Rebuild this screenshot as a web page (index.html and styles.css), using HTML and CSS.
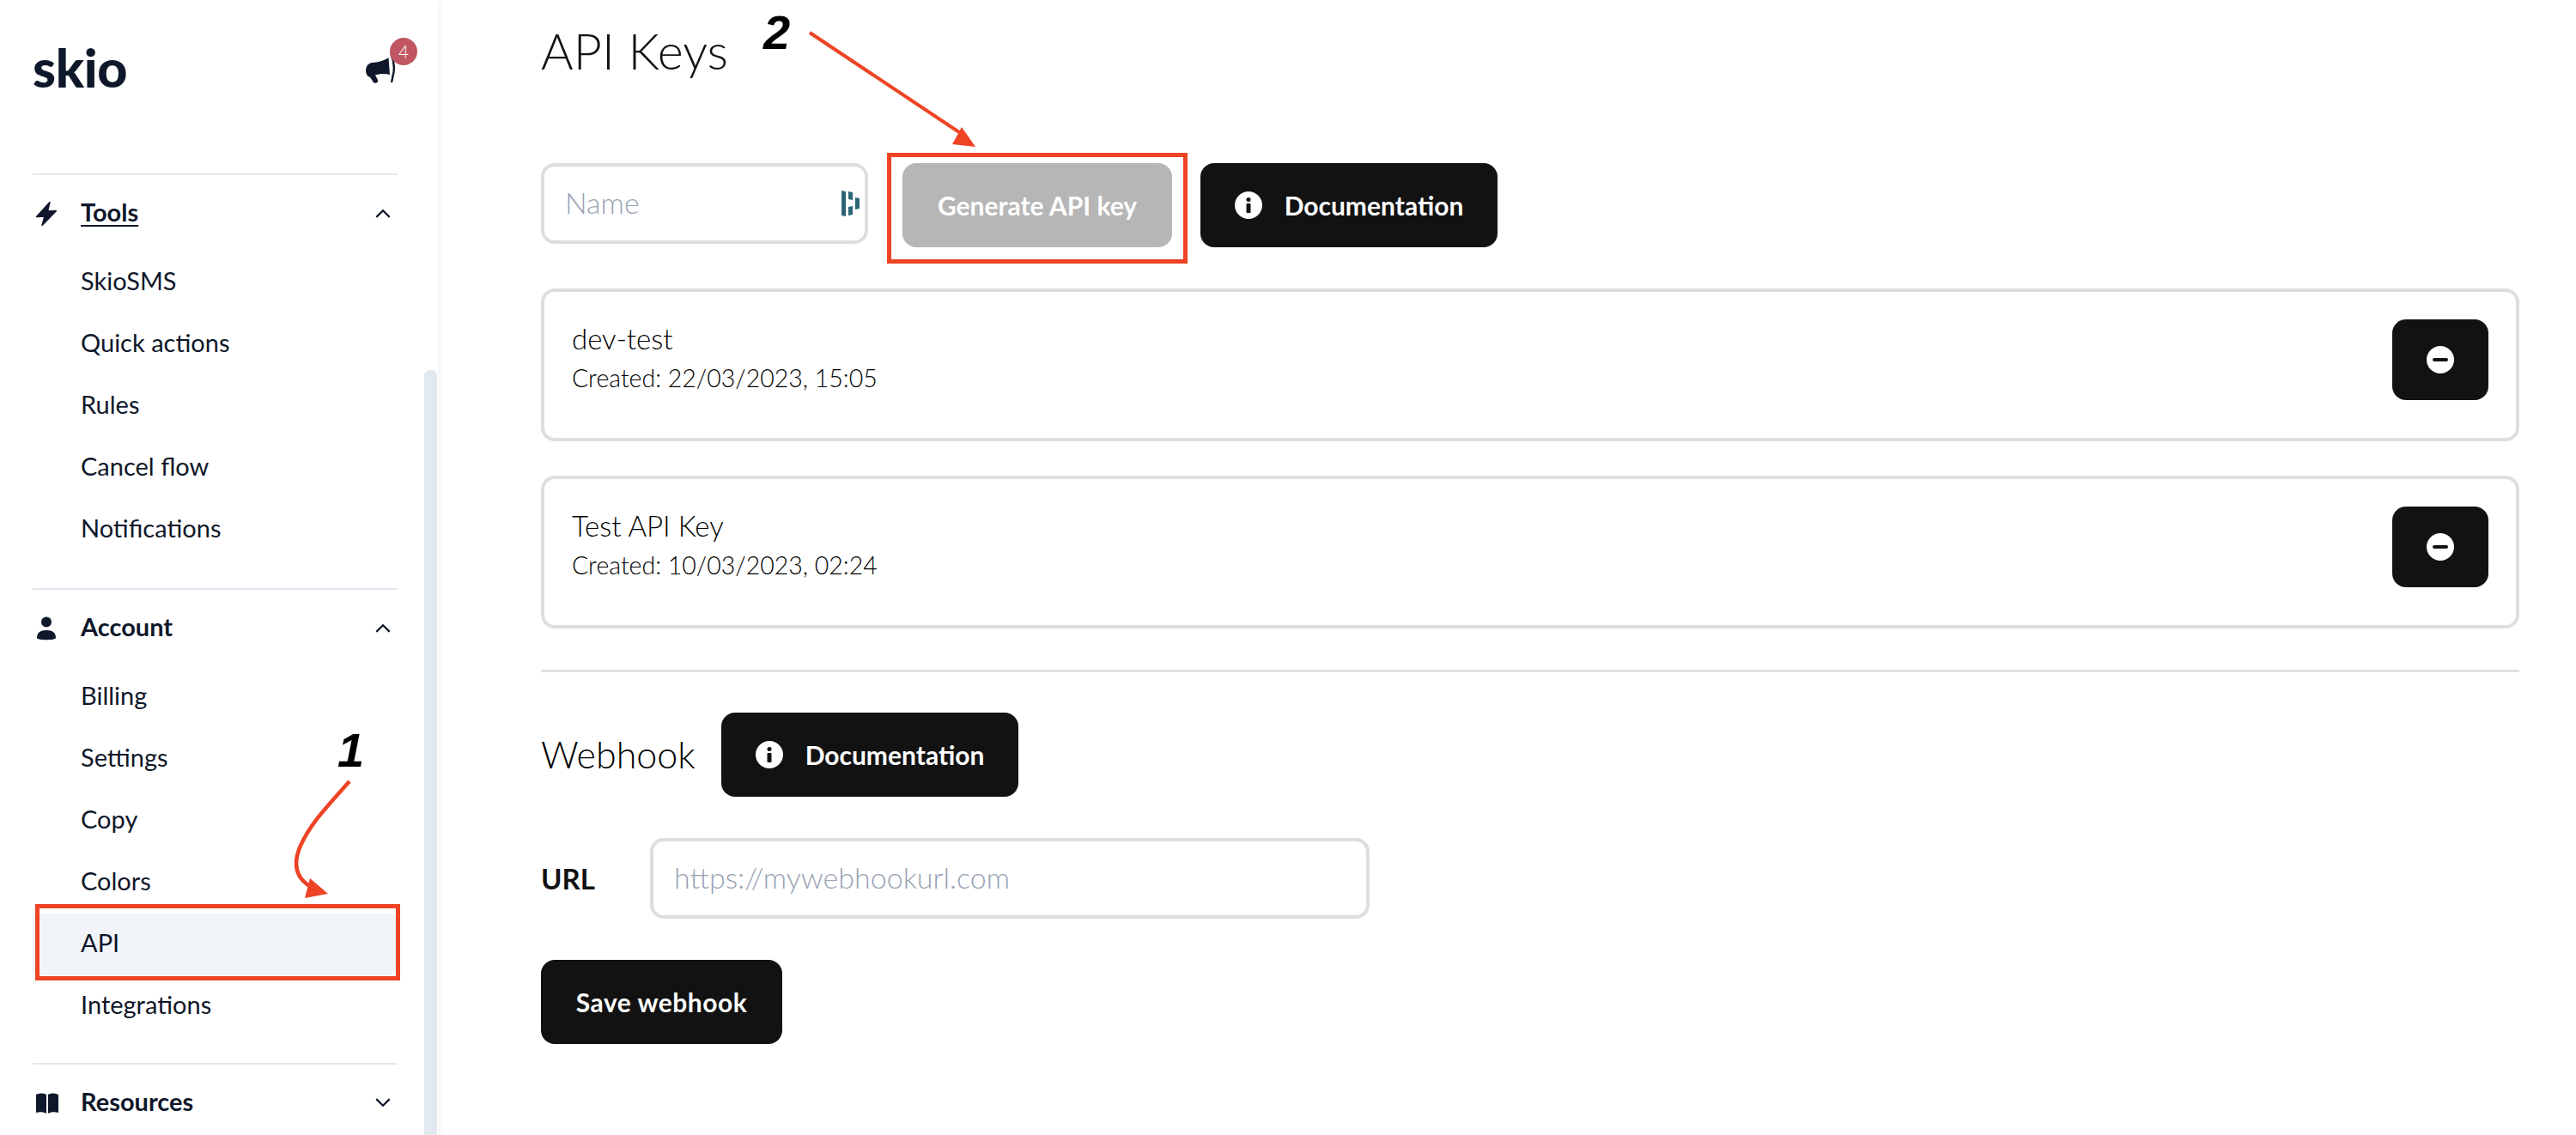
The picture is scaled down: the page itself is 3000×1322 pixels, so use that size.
FILE: index.html
```html
<!DOCTYPE html>
<html lang="en">
<head>
<meta charset="utf-8">
<title>API Keys</title>
<link rel="stylesheet" href="styles.css">
</head>
<body>
<div class="app">
  <aside class="sidebar">
    <div class="scrollbar"></div>
    <header class="brand">
      <div class="logo">skio</div>
      <div class="bell">
        <svg class="mega" viewBox="0 0 34 34" width="34" height="34"><path d="M26.500 4 L28 24 C22 22.500 16 23 11 24.500 L14 30 C15 33 11 35 9 33 L5 27 C1.500 26 -0.500 22 0.200 17.500 C1 13 3.500 10.500 7.500 10 C14 9.500 21 8 26.500 4 Z" fill="#0f172a"/><path d="M29.500 0.500 C33 8 33.500 13 32.500 21 L30 33" fill="none" stroke="#0f172a" stroke-width="2.400"/></svg>
        <span class="badge">4</span>
      </div>
    </header>
    <section class="group">
      <div class="group-head">
        <svg class="gicon" viewBox="0 0 24 28" width="24" height="28"><path d="M16 0.500 L0.500 17.500 L10 17 L7 27.500 L23.500 10.500 L13.500 11 Z" fill="#0f172a" stroke="#0f172a" stroke-width="1.500" stroke-linejoin="round"/></svg>
        <span class="group-title underlined">Tools</span>
        <svg class="chev" viewBox="0 0 16 10" width="18" height="11"><path d="M1 9 L8 2 L15 9" fill="none" stroke="#0f172a" stroke-width="2"/></svg>
      </div>
      <a class="item">SkioSMS</a>
      <a class="item">Quick actions</a>
      <a class="item">Rules</a>
      <a class="item">Cancel flow</a>
      <a class="item">Notifications</a>
    </section>
    <section class="group group-tight">
      <div class="group-head">
        <svg class="gicon" viewBox="0 0 24 28" width="24" height="28"><circle cx="12" cy="6.500" r="6" fill="#0f172a"/><path d="M1 25 C1 19 5 16 12 16 C19 16 23 19 23 25 C23 28 1 28 1 25 Z" fill="#0f172a"/></svg>
        <span class="group-title">Account</span>
        <svg class="chev" viewBox="0 0 16 10" width="18" height="11"><path d="M1 9 L8 2 L15 9" fill="none" stroke="#0f172a" stroke-width="2"/></svg>
      </div>
      <a class="item">Billing</a>
      <a class="item">Settings</a>
      <a class="item">Copy</a>
      <a class="item">Colors</a>
      <a class="item active">API</a>
      <a class="item">Integrations</a>
    </section>
    <section class="group">
      <div class="group-head">
        <svg class="gicon" viewBox="0 0 26 24" width="26" height="24"><path d="M0 2 C4 0 9 0 12 2 V24 C9 22 4 22 0 23 Z M14 2 C17 0 22 0 26 2 V23 C22 22 17 22 14 24 Z" fill="#0f172a"/></svg>
        <span class="group-title">Resources</span>
        <svg class="chev" viewBox="0 0 16 10" width="18" height="11"><path d="M1 1 L8 8 L15 1" fill="none" stroke="#0f172a" stroke-width="2"/></svg>
      </div>
    </section>
  </aside>

  <main class="main">
    <h1 class="title">API Keys</h1>
    <div class="toolbar">
      <label class="field name-field">
        <input class="input" placeholder="Name">
        <svg class="pm" viewBox="0 0 21 30" width="21" height="30"><path d="M0 0 L5 1 V30 L0 29 Z M8 1 L13 2 V11 L8 10 Z M8 19 L13 18 V28 L8 29 Z M16 8 L21 9 V21 L16 22 Z" fill="#2c6577"/></svg>
      </label>
      <button class="btn btn-muted gen">Generate API key</button>
      <button class="btn doc">
        <svg class="ic" viewBox="0 0 32 32" width="32" height="32"><circle cx="16" cy="16" r="16" fill="#fff"/><circle cx="16" cy="9.500" r="2.500" fill="#121212"/><rect x="13.500" y="14" width="5" height="11" rx="1" fill="#121212"/></svg>
        Documentation
      </button>
    </div>
    <div class="keys">
      <article class="card">
        <div>
          <div class="key-name">dev-test</div>
          <div class="key-date">Created: 22/03/2023, 15:05</div>
        </div>
        <button class="btn del" aria-label="Delete"><svg viewBox="0 0 32 32" width="32" height="32"><circle cx="16" cy="16" r="16" fill="#fff"/><rect x="7" y="14" width="18" height="4" rx="2" fill="#121212"/></svg></button>
      </article>
      <article class="card">
        <div>
          <div class="key-name">Test API Key</div>
          <div class="key-date">Created: 10/03/2023, 02:24</div>
        </div>
        <button class="btn del" aria-label="Delete"><svg viewBox="0 0 32 32" width="32" height="32"><circle cx="16" cy="16" r="16" fill="#fff"/><rect x="7" y="14" width="18" height="4" rx="2" fill="#121212"/></svg></button>
      </article>
    </div>
    <hr class="rule">
    <div class="webhook-head">
      <h2 class="subtitle">Webhook</h2>
      <button class="btn doc">
        <svg class="ic" viewBox="0 0 32 32" width="32" height="32"><circle cx="16" cy="16" r="16" fill="#fff"/><circle cx="16" cy="9.500" r="2.500" fill="#121212"/><rect x="13.500" y="14" width="5" height="11" rx="1" fill="#121212"/></svg>
        Documentation
      </button>
    </div>
    <div class="url-row">
      <span class="url-label">URL</span>
      <label class="field url-field"><input class="input" placeholder="https://mywebhookurl.com"></label>
    </div>
    <button class="btn save">Save webhook</button>
  </main>

  <svg class="annotations" viewBox="0 0 3000 1322" width="3000" height="1322">
    <rect x="43.500" y="1055.500" width="420" height="84" fill="none" stroke="#ee4325" stroke-width="5"/>
    <rect x="1035.500" y="180.500" width="345" height="124" fill="none" stroke="#ee4325" stroke-width="5"/>
    <path d="M407 910 C385 935 362 958 350 985 C340 1008 345 1024 364 1034" fill="none" stroke="#ee4325" stroke-width="4.500"/>
    <path d="M361 1023 L382 1041 L355 1046 Z" fill="#ee4325"/>
    <path d="M943 38 L1126 160" fill="none" stroke="#ee4325" stroke-width="4"/>
    <path d="M1120 148 L1136 171 L1109 168 Z" fill="#ee4325"/>
    <text class="mark" x="393" y="893">1</text>
    <text class="mark" x="889" y="57">2</text>
  </svg>
</div>
</body>
</html>
```
FILE: styles.css
```css
* { box-sizing: border-box; }
html, body { margin: 0; padding: 0; height: 100%; background: #fff; }
body { font-family: Lato, "Open Sans", sans-serif; color: #121212; overflow: hidden; }
.app { display: flex; width: 3000px; height: 1322px; position: relative; overflow: hidden; }

.sidebar { position: relative; flex: none; width: 510px; height: 1322px; padding-left: 38px; box-shadow: 3px 0 4px #f4f5f8; color: #0f172a; overflow: hidden; }
.scrollbar { position: absolute; left: 494px; top: 431px; width: 15px; height: 900px; border-radius: 7px; background: #e2e8f0; }
.brand { display: flex; width: 425px; height: 202px; position: relative; }
.logo { font-size: 61px; font-weight: 900; line-height: 60px; margin-top: 49px; letter-spacing: -0.300px; }
.bell { position: absolute; left: 388px; top: 44px; width: 60px; height: 54px; }
.mega { position: absolute; left: 0; top: 19px; }
.badge { position: absolute; left: 28px; top: 0; width: 32px; height: 32px; border-radius: 50%; background: #c05661; color: #fff; font-size: 21px; line-height: 32px; text-align: center; font-weight: 300; }

.group { width: 425px; border-top: 2px solid #e2e8f0; padding-bottom: 32px; }
.group-tight { padding-bottom: 30px; }
.group-head { display: flex; align-items: center; height: 36px; margin: 27px 0 26px; position: relative; }
.gicon { position: absolute; left: 4px; top: 50%; transform: translateY(-50%); }
.group-title { margin-left: 56px; padding-bottom: 4px; font-size: 29px; font-weight: 700; line-height: 32px; }
.underlined { text-decoration: underline; text-underline-offset: 4px; text-decoration-thickness: 2px; }
.chev { position: absolute; left: 399px; top: 12px; }
.item { display: block; height: 72px; line-height: 68px; padding-left: 56px; font-size: 29px; border-radius: 8px; }
.item.active { background: #f1f5f9; }

.main { flex: 1; padding: 28px 66px 0 120px; min-width: 0; }
.title { margin: 0 0 100px; font-size: 57.500px; font-weight: 300; line-height: 62px; }
.toolbar { display: flex; align-items: flex-start; }
.field { display: flex; align-items: center; height: 94px; border: 4px solid #dedede; border-radius: 16px; background: #fff; padding: 0 24px; }
.input { flex: 1; min-width: 0; border: 0; outline: 0; padding: 0 0 3px; background: none; font: 300 34px Lato, sans-serif; color: #121212; }
.input::placeholder { color: #98a2b3; opacity: 1; }
.name-field { width: 381px; padding-right: 6px; }
.pm { flex: none; }

.btn { display: inline-flex; align-items: center; justify-content: center; flex: none; height: 98px; border: 0; border-radius: 16px; background: #121212; color: #fff; font: 700 30px Lato, sans-serif; padding: 0; }
.btn-muted { background: #b6b6b6; }
.gen { width: 314px; margin-left: 40px; }
.doc { width: 346px; gap: 26px; margin-left: 33px; }
.ic { flex: none; }

.keys { display: flex; flex-direction: column; gap: 40px; margin-top: 48px; }
.card { display: flex; align-items: flex-start; justify-content: space-between; height: 178px; border: 4px solid #dedede; border-radius: 16px; padding: 32px 32px 0; }
.key-name { font-size: 33px; line-height: 44px; font-weight: 300; color: #000; }
.key-date { font-size: 28.500px; line-height: 40px; font-weight: 300; color: #000; margin-top: 4px; }
.del { width: 112px; height: 94px; }

.rule { height: 3px; border: 0; background: #e0e0e0; margin: 48px 0 47px; }
.webhook-head { display: flex; align-items: center; height: 98px; }
.subtitle { margin: 0; font-size: 43px; font-weight: 300; line-height: 50px; width: 177px; color: #000; }
.webhook-head .doc { margin-left: 33px; }
.url-row { display: flex; align-items: center; margin-top: 48px; }
.url-label { width: 127px; font-size: 33px; font-weight: 700; }
.url-field { width: 838px; }
.save { width: 281px; margin-top: 48px; letter-spacing: 0.500px; }

.annotations { position: absolute; left: 0; top: 0; pointer-events: none; }
.mark { font-family: "Liberation Sans", sans-serif; font-weight: 700; font-style: italic; font-size: 56px; fill: #000; }
```
